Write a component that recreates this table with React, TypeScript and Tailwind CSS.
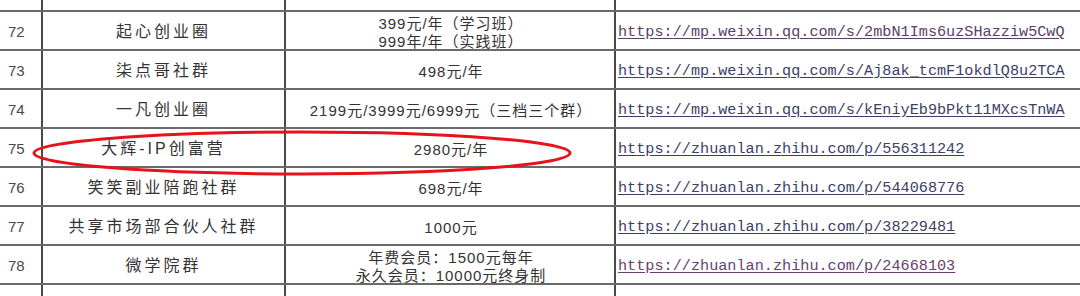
type Row = {
  no: string
  name: string
  price: string[]
  url: string
  urlColor: string
}

const rows: Row[] = [
  {
    no: '72',
    name: '起心创业圈',
    price: ['399元/年（学习班）', '999年/年（实践班）'],
    url: 'https://mp.weixin.qq.com/s/2mbN1Ims6uzSHazziw5CwQ',
    urlColor: 'text-[#5c3f66]',
  },
  {
    no: '73',
    name: '柒点哥社群',
    price: ['498元/年'],
    url: 'https://mp.weixin.qq.com/s/Aj8ak_tcmF1okdlQ8u2TCA',
    urlColor: 'text-[#3e3f66]',
  },
  {
    no: '74',
    name: '一凡创业圈',
    price: ['2199元/3999元/6999元（三档三个群）'],
    url: 'https://mp.weixin.qq.com/s/kEniyEb9bPkt11MXcsTnWA',
    urlColor: 'text-[#3e3f66]',
  },
  {
    no: '75',
    name: '大辉-IP创富营',
    price: ['2980元/年'],
    url: 'https://zhuanlan.zhihu.com/p/556311242',
    urlColor: 'text-[#3e3f66]',
  },
  {
    no: '76',
    name: '笑笑副业陪跑社群',
    price: ['698元/年'],
    url: 'https://zhuanlan.zhihu.com/p/544068776',
    urlColor: 'text-[#3e3f66]',
  },
  {
    no: '77',
    name: '共享市场部合伙人社群',
    price: ['1000元'],
    url: 'https://zhuanlan.zhihu.com/p/38229481',
    urlColor: 'text-[#3e3f66]',
  },
  {
    no: '78',
    name: '微学院群',
    price: ['年费会员：1500元每年', '永久会员：10000元终身制'],
    url: 'https://zhuanlan.zhihu.com/p/24668103',
    urlColor: 'text-[#6a3f70]',
  },
]

const cjk = "font-['Liberation_Sans','Noto_Sans_CJK_SC',sans-serif]"

function EmptyRow({ height, bottom }: { height: string; bottom?: boolean }) {
  return (
    <div className={`flex ${height} ${bottom ? 'border-b-2 border-[#6a6a6a]' : ''}`}>
      <div className="w-[43px] shrink-0 border-r-2 border-[#4a4a4a]" />
      <div className="w-[243px] shrink-0 border-r-2 border-[#4a4a4a]" />
      <div className="w-[330px] shrink-0 border-r-2 border-[#4a4a4a]" />
      <div className="flex-1" />
    </div>
  )
}

export default function App() {
  return (
    <div className={`relative h-[296px] w-[1080px] overflow-hidden bg-white ${cjk}`}>
      <EmptyRow height="h-[12px]" bottom />
      {rows.map((r) => (
        <div key={r.no} className="flex h-[39px] border-b-2 border-[#6a6a6a]">
          <div className="flex w-[43px] shrink-0 items-center border-r-2 border-[#4a4a4a] pl-[8px] pt-[3px] text-[15px] text-[#4a4a4a]">
            {r.no}
          </div>
          <div className="flex w-[243px] shrink-0 items-center justify-center border-r-2 border-[#4a4a4a] pt-[3px] text-[16px] tracking-[3px] text-[#333]">
            {r.name}
          </div>
          <div className="flex w-[330px] shrink-0 flex-col items-center justify-center border-r-2 border-[#4a4a4a] pl-[2px] pt-[4px] text-[15px] leading-[18px] tracking-[1px] text-[#333]">
            {r.price.map((p) => (
              <div key={p} className="whitespace-nowrap">
                {p}
              </div>
            ))}
          </div>
          <div className="flex flex-1 items-center pl-[2px] pt-[3px]">
            <span
              className={`whitespace-nowrap font-['Liberation_Mono',monospace] text-[15.2px] underline underline-offset-2 ${r.urlColor}`}
            >
              {r.url}
            </span>
          </div>
        </div>
      ))}
      <EmptyRow height="h-[12px]" />

      <svg className="pointer-events-none absolute inset-0" width="1080" height="296">
        <ellipse cx="302" cy="153" rx="268" ry="21" fill="none" stroke="#e8121a" strokeWidth="3" />
      </svg>
    </div>
  )
}
